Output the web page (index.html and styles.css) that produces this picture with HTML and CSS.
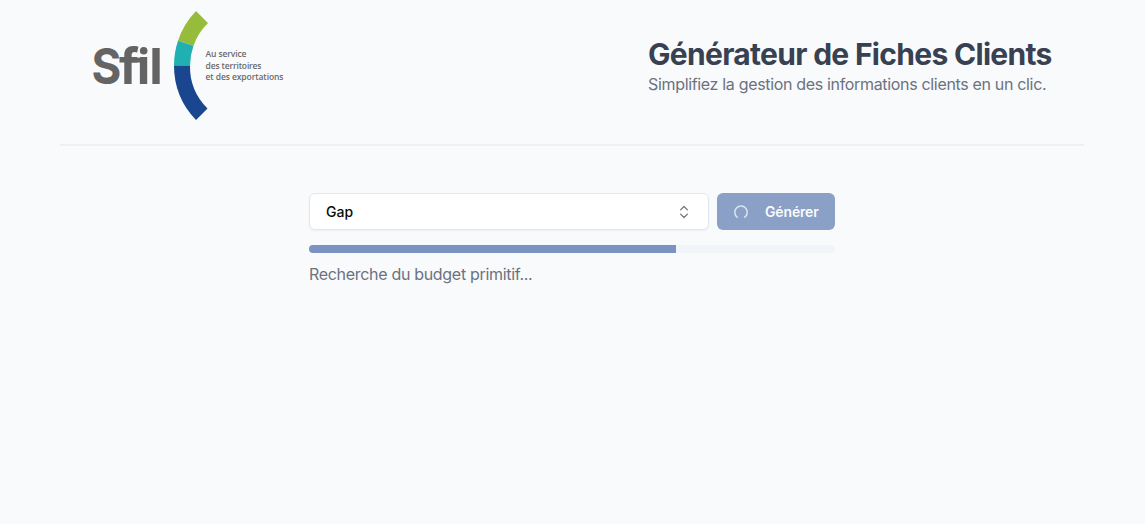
FILE: index.html
```html
<!DOCTYPE html>
<html lang="fr">
<head>
<meta charset="utf-8">
<title>Générateur de Fiches Clients</title>
<link rel="stylesheet" href="styles.css">
</head>
<body>
<header class="header">
  <svg class="logo" width="200" height="112" viewBox="88 10 200 112" role="img" aria-label="Sfil">
    <g class="brand">
      <text transform="translate(91.500 84) scale(.91 1)">S</text>
      <text y="84" x="119 136.800 149.200">fıl</text>
    </g>
    <circle cx="143.700" cy="50.800" r="3.800" fill="#646464"/>
    <path d="M130 60.200H142M132 48.800H137" stroke="#646464" stroke-width="4.800"/>
    <path d="M196 11A78.5 78.5 0 0 0 178 40.7L193.5 45.7A59.2 59.2 0 0 1 208 23Z" fill="#97bc3c"/>
    <path d="M178 40.7A78.5 78.5 0 0 0 174 65.5H190A59.2 59.2 0 0 1 193.5 45.7Z" fill="#20b0b2"/>
    <path d="M174 65.5A78.5 78.5 0 0 0 196 120L207.500 108.500A59.2 59.2 0 0 1 190 65.500Z" fill="#19468f"/>
    <g class="tagline">
      <text x="205.500" y="57.300" textLength="41">Au service</text>
      <text x="205.500" y="68.500" textLength="56">des territoires</text>
      <text x="205.500" y="79.800" textLength="78">et des exportations</text>
    </g>
  </svg>
  <div class="heading">
    <h1 class="title">Générateur de Fiches Clients</h1>
    <p class="subtitle">Simplifiez la gestion des informations clients en un clic.</p>
  </div>
</header>
<main class="main">
  <div class="controls">
    <button class="select" type="button">
      <span>Gap</span>
      <svg width="16" height="16" viewBox="0 0 15 15" fill="none" stroke="#7b7b7b" stroke-width="1.3" stroke-linecap="round" stroke-linejoin="round"><path d="M4.300 5.500L7.500 2.300L10.700 5.500M4.300 9.500L7.500 12.700L10.700 9.500"/></svg>
    </button>
    <button class="generate" type="button">
      <svg width="16" height="16" viewBox="0 0 16 16" fill="none" stroke="#dce4f0" stroke-width="1.5" stroke-linecap="round"><path d="M4.200 13.200A6.200 6.200 0 1 1 11.800 13.200"/></svg>
      <span>Générer</span>
    </button>
  </div>
  <div class="progress"><div class="bar" style="width:69.8%"></div></div>
  <p class="status">Recherche du budget primitif...</p>
</main>
</body>
</html>
```
FILE: styles.css
```css
* { box-sizing: border-box; }
body { margin: 0; min-height: 524px; background: #f9fafc; font-family: Inter, "Liberation Sans", sans-serif; }
h1, p { margin: 0; }
.header { width: 1024px; height: 146px; margin-left: 60px; padding: 10px 32px 0 28px; border-bottom: 2px solid #eff0f2; display: flex; justify-content: space-between; align-items: flex-start; }
.logo { display: block; }
.brand { font: 700 50px Inter, sans-serif; fill: #646464; }
.tagline { font: 600 8.500px "Open Sans", sans-serif; fill: #6a6a6a; }
.heading { width: 404px; padding-top: 26px; white-space: nowrap; }
.title { font-size: 30px; line-height: 36px; font-weight: 700; letter-spacing: -0.69px; color: #374151; }
.subtitle { font-size: 16px; line-height: 24px; letter-spacing: -0.33px; color: #6b7280; }
.main { width: 526px; margin: 47px 0 0 309px; }
.controls { display: flex; gap: 8px; }
.select, .generate { height: 37px; border-radius: 6px; font: 500 14px/20px Inter, sans-serif; display: flex; align-items: center; }
.select { width: 400px; padding: 0 16px; justify-content: space-between; background: #fff; color: #0a0a0a; border: 1px solid #e2e8f0; box-shadow: 0 1px 2px rgba(0,0,0,.05); }
.generate { width: 118px; padding: 0 16px; gap: 16px; border: 0; font-weight: 600; letter-spacing: -.15px; background: #8aa0c6; color: #f9fafc; }
.progress { height: 8px; margin-top: 15.400px; border-radius: 4px; overflow: hidden; background: #f1f5f9; }
.bar { height: 8px; background: #7a93c1; }
.status { margin-top: 8.600px; font-size: 16px; line-height: 24px; letter-spacing: -0.31px; color: #6b7280; white-space: nowrap; }
```
